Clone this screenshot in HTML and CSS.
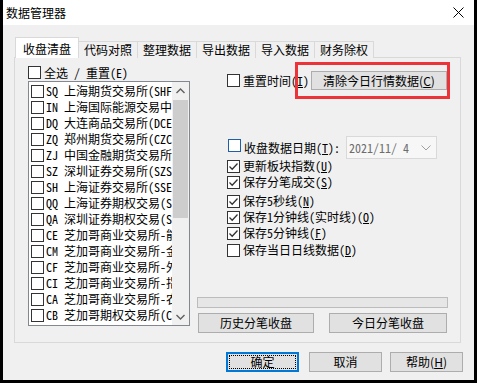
FILE: index.html
```html
<!DOCTYPE html>
<html lang="zh-CN">
<head>
    <meta charset="UTF-8">
    <title>数据管理器</title>
    <link rel="stylesheet" href="styles.css">
</head>
<body>
    <div class="window">
        <div class="titlebar">
            <span class="title">数据管理器</span>
            <svg class="close" width="11" height="11" viewBox="0 0 11 11"><path d="M0.5 0.5 L10.5 10.5 M10.5 0.5 L0.5 10.5" stroke="#000" stroke-width="1"/></svg>
        </div>

        <div class="client">
            <div class="tabs">
                <div class="tab active">收盘清盘</div>
                <div class="tab">代码对照</div>
                <div class="tab">整理数据</div>
                <div class="tab">导出数据</div>
                <div class="tab">导入数据</div>
                <div class="tab">财务除权</div>
            </div>

            <div class="panel">
                <div class="left-col">
                    <div class="chk-row all">
                        <span class="box"></span>
                        <span class="lbl">全选 / 重置(E)</span>
                    </div>
                    <div class="listbox">
                        <div class="items">
                            <div class="item"><span class="box"></span><span class="lbl">SQ 上海期货交易所(SHFE)</span></div>
                            <div class="item"><span class="box"></span><span class="lbl">IN 上海国际能源交易中心</span></div>
                            <div class="item"><span class="box"></span><span class="lbl">DQ 大连商品交易所(DCE)</span></div>
                            <div class="item"><span class="box"></span><span class="lbl">ZQ 郑州期货交易所(CZCE)</span></div>
                            <div class="item"><span class="box"></span><span class="lbl">ZJ 中国金融期货交易所</span></div>
                            <div class="item"><span class="box"></span><span class="lbl">SZ 深圳证券交易所(SZSE)</span></div>
                            <div class="item"><span class="box"></span><span class="lbl">SH 上海证券交易所(SSE)</span></div>
                            <div class="item"><span class="box"></span><span class="lbl">QQ 上海证券期权交易(SSE)</span></div>
                            <div class="item"><span class="box"></span><span class="lbl">QA 深圳证券期权交易(SZSE)</span></div>
                            <div class="item"><span class="box"></span><span class="lbl">CE 芝加哥商业交易所-能源</span></div>
                            <div class="item"><span class="box"></span><span class="lbl">CM 芝加哥商业交易所-金属</span></div>
                            <div class="item"><span class="box"></span><span class="lbl">CF 芝加哥商业交易所-外汇</span></div>
                            <div class="item"><span class="box"></span><span class="lbl">CI 芝加哥商业交易所-指数</span></div>
                            <div class="item"><span class="box"></span><span class="lbl">CA 芝加哥商业交易所-农产品</span></div>
                            <div class="item"><span class="box"></span><span class="lbl">CB 芝加哥期权交易所(CBOE)</span></div>
                        </div>
                        <div class="scrollbar">
                            <div class="sb-btn">
                                <svg width="9" height="6" viewBox="0 0 9 6"><path d="M0.5 5 L4.5 1 L8.5 5" fill="none" stroke="#606060" stroke-width="1.4"/></svg>
                            </div>
                            <div class="sb-track">
                                <div class="sb-thumb"></div>
                            </div>
                            <div class="sb-btn">
                                <svg width="9" height="6" viewBox="0 0 9 6"><path d="M0.5 1 L4.5 5 L8.5 1" fill="none" stroke="#606060" stroke-width="1.4"/></svg>
                            </div>
                        </div>
                    </div>
                </div>

                <div class="right-col">
                    <div class="reset-row">
                        <span class="box"></span>
                        <span class="lbl">重置时间(<u>I</u>)</span>
                        <button class="btn clear-btn">清除今日行情数据(<u>C</u>)</button>
                        <div class="highlight"></div>
                    </div>

                    <div class="date-row">
                        <span class="box focus"></span>
                        <span class="lbl">收盘数据日期(<u>T</u>):</span>
                        <div class="datepicker">
                            <span>2021/11/ 4</span>
                            <svg width="10" height="6" viewBox="0 0 10 6"><path d="M0.5 0.5 L5 5 L9.5 0.5" fill="none" stroke="#a0a0a0" stroke-width="1"/></svg>
                        </div>
                    </div>

                    <div class="opt r1"><span class="box checked"></span><span class="lbl">更新板块指数(<u>U</u>)</span></div>
                    <div class="opt"><span class="box checked"></span><span class="lbl">保存分笔成交(<u>S</u>)</span></div>
                    <div class="opt r3"><span class="box checked"></span><span class="lbl">保存5秒线(<u>N</u>)</span></div>
                    <div class="opt"><span class="box checked"></span><span class="lbl">保存1分钟线(实时线)(<u>O</u>)</span></div>
                    <div class="opt"><span class="box checked"></span><span class="lbl">保存5分钟线(<u>F</u>)</span></div>
                    <div class="opt r6"><span class="box"></span><span class="lbl">保存当日日线数据(<u>D</u>)</span></div>

                    <div class="progress"></div>

                    <div class="tick-buttons">
                        <button class="btn hist-btn">历史分笔收盘</button>
                        <button class="btn today-btn">今日分笔收盘</button>
                    </div>
                </div>
            </div>

            <div class="dlg-buttons">
                <button class="btn dlg default">确定</button>
                <button class="btn dlg">取消</button>
                <button class="btn dlg">帮助(<u>H</u>)</button>
            </div>
        </div>
    </div>

    <script>
        // put the check marks into checked boxes
        document.querySelectorAll('.box.checked').forEach(box => {
            box.innerHTML = '<svg width="11" height="11" viewBox="0 0 11 11"><path d="M1.5 5.5 L4.2 8.2 L9.5 2.5" fill="none" stroke="#333" stroke-width="1.3"/></svg>';
        });
    </script>
</body>
</html>
```

FILE: styles.css
```css
* {
    box-sizing: border-box;
}
body {
    margin: 0;
    width: 477px;
    height: 383px;
    overflow: hidden;
    background: #000;
    font-family: "Noto Sans Mono CJK SC", "Noto Sans CJK SC", sans-serif;
    font-size: 12px;
    color: #000;
}
u {
    text-decoration: underline;
    text-underline-offset: 1px;
}
.window {
    margin-left: 3px;
    width: 471px;
    height: 380px;
    background: #f0f0f0;
}
.titlebar {
    height: 25px;
    background: #fff;
    display: flex;
    align-items: center;
    justify-content: space-between;
    padding: 0 10px 0 3px;
}
.title {
    font-family: "Noto Sans CJK SC", sans-serif;
    font-size: 12px;
    line-height: 12px;
}
.client {
    padding: 12px 0 0 11px;
}

/* tabs */
.tabs {
    display: flex;
    align-items: flex-end;
    height: 21px;
    margin-left: 1px;
    margin-bottom: -1px;
    position: relative;
    z-index: 1;
    font-family: "Noto Sans CJK SC", sans-serif;
}
.tab {
    height: 17px;
    line-height: 16px;
    padding: 0 5px;
    border: 1px solid #d9d9d9;
    border-bottom: none;
    border-left: none;
    background: #f0f0f0;
}
.tab.active {
    height: 21px;
    line-height: 21px;
    padding: 0 7px;
    border-left: 1px solid #d9d9d9;
    background: #fff;
}

/* panel */
.panel {
    width: 447px;
    height: 286px;
    border: 1px solid #d9d9d9;
    background: #f0f0f0;
    display: flex;
    padding-left: 13px;
}
.left-col {
    width: 162px;
    padding-top: 8px;
}
.chk-row {
    display: flex;
    align-items: center;
    height: 13px;
}
.box {
    width: 13px;
    height: 13px;
    flex: none;
    border: 1px solid #333;
    background: #fff;
    display: flex;
    align-items: center;
    justify-content: center;
}
.box.focus {
    border-color: #1f5fa6;
}
.lbl {
    margin-left: 3px;
    white-space: nowrap;
    line-height: 16px;
}
.listbox {
    margin-top: 2px;
    height: 245px;
    border: 1px solid #828790;
    background: #fff;
    display: flex;
}
.items {
    flex: 1;
    overflow: hidden;
    padding-top: 1px;
}
.item {
    height: 16px;
    display: flex;
    align-items: center;
    padding-left: 2px;
}
.item .lbl {
    margin-left: 2px;
}
.scrollbar {
    width: 17px;
    flex: none;
    display: flex;
    flex-direction: column;
    background: #f0f0f0;
}
.sb-btn {
    height: 17px;
    display: flex;
    align-items: center;
    justify-content: center;
}
.sb-track {
    flex: 1;
}
.sb-thumb {
    height: 118px;
    margin: 1px 1px 0;
    background: #cdcdcd;
}

/* right side */
.right-col {
    width: 251px;
    margin-left: 7px;
    display: flex;
    flex-direction: column;
}
.reset-row {
    position: relative;
    margin-top: 13px;
    height: 19px;
    display: flex;
    align-items: center;
    padding-left: 30px;
}
.btn {
    font-family: "Noto Sans CJK SC", sans-serif;
    font-size: 12px;
    color: #000;
    background: #e1e1e1;
    border: 1px solid #adadad;
    padding: 0;
    line-height: 16px;
}
.clear-btn {
    margin-left: auto;
    margin-right: 1px;
    width: 136px;
    height: 19px;
}
.highlight {
    position: absolute;
    left: 98px;
    top: -9px;
    width: 155px;
    height: 37px;
    border: 3px solid #ec3337;
}
.date-row {
    margin-top: 46px;
    height: 23px;
    display: flex;
    align-items: center;
    padding-left: 31px;
}
.date-row .box {
    margin-bottom: 4px;
}
.datepicker {
    margin-left: auto;
    margin-right: 11px;
    width: 91px;
    height: 23px;
    border: 1px solid #d9d9d9;
    background: #f7f7f7;
    color: #6d6d6d;
    display: flex;
    align-items: center;
    justify-content: space-between;
    padding: 0 5px 0 2px;
}
.opt {
    height: 16px;
    display: flex;
    align-items: center;
    padding-left: 30px;
}
.opt.r1 {
    margin-top: -1px;
}
.opt.r3 {
    margin-top: 3px;
}
.opt.r6 {
    margin-top: 1px;
}
.progress {
    margin-top: 39px;
    height: 11px;
    border: 1px solid #bcbcbc;
    background: #e6e6e6;
}
.tick-buttons {
    margin-top: 5px;
    display: flex;
}
.hist-btn {
    margin-left: 1px;
    width: 116px;
    height: 20px;
}
.today-btn {
    margin-left: 15px;
    width: 118px;
    height: 20px;
}

/* dialog buttons */
.dlg-buttons {
    margin-top: 9px;
    padding-left: 212px;
    display: flex;
}
.dlg {
    width: 73px;
    height: 20px;
    margin-right: 10px;
}
.dlg:last-child {
    margin-left: -2px;
}
.dlg.default {
    position: relative;
    border-color: #0078d7;
    box-shadow: inset 0 0 0 1px #0078d7;
}
.dlg.default::after {
    content: "";
    position: absolute;
    left: 2px;
    top: 2px;
    right: 2px;
    bottom: 2px;
    border: 1px dotted #000;
}
```
